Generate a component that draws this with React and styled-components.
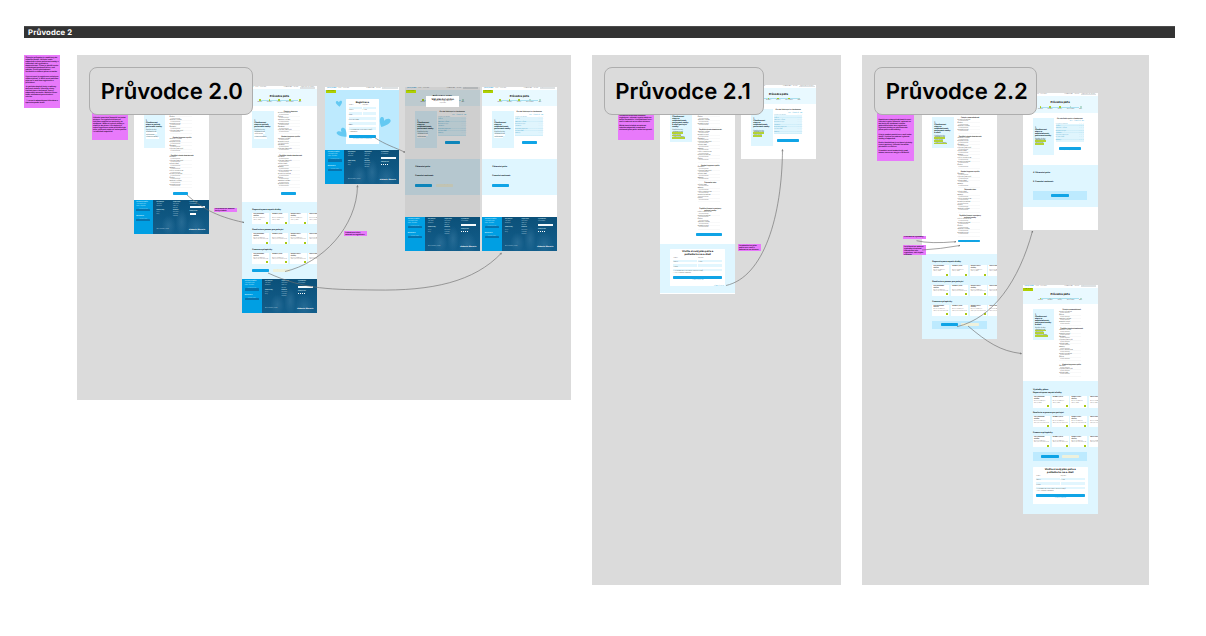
import React from "react";
import styled, { createGlobalStyle } from "styled-components";

const Global = createGlobalStyle`
  * { box-sizing: border-box; }
  body { margin: 0; background: #fff; font-family: Inter, "Liberation Sans", sans-serif; text-rendering: geometricPrecision; }
`;

/* ---------- canvas ---------- */
const Canvas = styled.main`
  position: relative; width: 1206px; height: 636px; overflow: hidden; background: #fff;
`;
const Placed = styled.div`
  position: absolute; left: ${p => p.$x}px; top: ${p => p.$y}px;
  width: ${p => p.$w}px; height: ${p => p.$h}px; overflow: hidden;
`;
const TitleBar = styled(Placed)`
  background: #333; border-top: 1px solid #4b4b4b; color: #fff; padding-left: 4px;
  font-size: 7.7px; font-weight: 700; line-height: 11px; letter-spacing: .16px;
`;
const Section = styled(Placed)`background: #dbdbdb;`;
const Frame = styled(Placed)`background: #fff; display: flex; flex-direction: column;`;
const Pill = styled(Placed)`
  margin: 0; background: #dbdbdb; border: 1px solid #adadad; border-radius: 8px; display: flex; align-items: center;
  padding: 1.5px 0 0 10.6px; color: #000; font-size: 22.1px; font-weight: 600; letter-spacing: -.05px; white-space: nowrap;
`;
const Sticky = styled(Placed)`
  background: #e879fb; color: #2b0733; padding: ${p => p.$pad || "2px 2px"};
  font-size: 1.9px; line-height: 2px; font-weight: 700;
  display: flex; flex-direction: column; justify-content: ${p => p.$end ? "flex-end" : "flex-start"};
  p { margin: 0 0 2.2px; }
  p:last-child { margin-bottom: ${p => p.$end || 0}px; }
`;
const Arrows = styled.svg`
  position: absolute; left: 0; top: 0; width: 1206px; height: 636px; pointer-events: none;
`;

/* ---------- page parts ---------- */
const Nav = styled.div`
  height: 3px; flex: none; display: flex; align-items: center; gap: 1.6px; padding: 0 1.5px 0 2px;
  font-size: 1.6px; line-height: 3px; color: #555; white-space: nowrap; background: #fff;
  b { color: #169edb; } i { flex: 1; }
`;
const NavBox = styled.span`background: #dde1e3; height: 1.6px; line-height: 1.6px; padding: 0 1px;`;
const Hero = styled.div`
  position: relative; flex: none; height: 16.7px; background: #e9f9ff; display: flex; flex-direction: column;
  align-items: center; padding-top: 4.4px;
`;
const HeroTitle = styled.div`font-size: 2.6px; line-height: 4px; font-weight: 800; color: #222;`;
const Steps = styled.div`
  margin-top: 1.6px; width: 44px; display: flex; justify-content: space-between;
  background: linear-gradient(#a9dfef, #a9dfef) 3px .6px / 38px 1px no-repeat;
`;
const Step = styled.div`
  display: flex; flex-direction: column; align-items: center; font-size: 1.35px; line-height: 1.5px; color: #444;
  &::before { content: ""; width: 1.6px; height: 1.6px; border-radius: 50%; background: ${p => p.$on ? "#a5cb00" : "#a8d8c8"}; margin-bottom: 1px; }
`;
const GreenTag = styled.div`
  position: absolute; left: .5px; top: 0; width: 10px; height: 3px; background: #afd000;
  color: #5a7400; font-size: 1.4px; line-height: 3px; text-align: center; z-index: 1;
`;
const Body = styled.div`
  flex: none; height: ${p => p.$h}px; display: flex; gap: ${p => p.$gap ?? 4.5}px; padding: 5px 0 0 10.3px; overflow: hidden;
`;
const Side = styled.aside`
  flex: none; width: 21.3px; height: ${p => p.$h || 37}px; background: #dff6ff; padding: ${p => p.$top ?? 9}px 2px 0;
  font-size: 2px; line-height: 2px; font-weight: 800; color: #173039;
  small { display: block; font-size: 1.6px; line-height: 2.6px; font-weight: 500; margin-top: 1.2px; }
`;
const Mark = styled.span`
  display: table; background: ${p => p.$g ? "#b3d334" : "#fff"}; color: ${p => p.$g ? "#3a4d00" : "#555"};
  font-size: 1.5px; line-height: 1.9px; font-weight: 600; padding: 0 .5px; margin-bottom: .7px;
`;
const Form = styled.div`flex: none; width: 25px; display: flex; flex-direction: column;`;
const GroupTitle = styled.div`
  flex: none; height: ${p => p.$h || 2.4}px; margin-top: ${p => p.$gap || 0}px; font-size: 1.7px; line-height: 2px; font-weight: 700;
  text-align: center; color: #222; white-space: nowrap;
`;
const Row = styled.div`
  flex: none; height: 3.4px; width: 22px; color: #333; font-size: 1.55px; line-height: 1.6px; font-weight: 500;
  background: linear-gradient(#f1f2f3, #f1f2f3) 0 100% / 100% .5px no-repeat;
  white-space: nowrap; span { padding-left: 1px; display: block; color: #777; font-size: 1.3px; line-height: 1.4px; }
`;
const Button = styled.div`
  flex: none; width: ${p => p.$w || 15}px; height: 2.9px; border-radius: .7px; margin: ${p => p.$m || 0};
  background: ${p => p.$ghost ? "#eef1dc" : "#10a4e6"}; color: ${p => p.$ghost ? "#77774a" : "#07496c"};
  font-size: 1.5px; line-height: 2.8px; font-weight: 500; text-align: center; white-space: nowrap; overflow: hidden;
`;
const LinkLine = styled.div`font-size: 1.5px; line-height: 2.4px; color: #25a5d8; text-align: ${p => p.$a || "center"}; padding-right: ${p => p.$r || 0}px;`;
const Band = styled.div`
  flex: none; height: ${p => p.$h}px; padding: ${p => p.$top}px 0 0 10.3px; background: #dff6ff; overflow: hidden;
`;
const BandTitle = styled.div`
  font-size: 2px; line-height: 3px; height: ${p => p.$h || 3.8}px; font-weight: 800; color: #152c35; white-space: nowrap;
`;
const CardRow = styled.div`display: flex; gap: 1.5px; margin-bottom: 4.7px; width: 80px;`;
const Card = styled.div`
  flex: none; width: 17.2px; height: 11.3px; background: #fff; padding: 1px 1.2px .6px; display: flex; flex-direction: column;
  font-size: 1.35px; line-height: 1.6px; color: #666; overflow: hidden;
  b { font-size: 1.6px; line-height: 1.9px; color: #111; height: 3.9px; flex: none; }
`;
const Plus = styled.i`align-self: flex-end; margin-top: auto; flex: none; width: 2px; height: 2px; background: #a8c914;`;
const ActionRow = styled.div`display: flex; gap: 3.5px;`;
const ActionBox = styled.div`
  width: 54.5px; height: 8.8px; background: #bdeafe; display: flex; align-items: center; justify-content: center; gap: 3px;
`;
const TableCol = styled.div`flex: none; width: 28px; display: flex; flex-direction: column;`;
const TableRow = styled.div`
  display: flex; justify-content: space-between; height: 2.3px;
  background: linear-gradient(#c3e8f6, #c3e8f6) 0 100% / 100% .5px no-repeat #e0f5fd;
  font-size: 1.45px; line-height: 2px; color: #3c9fca; white-space: nowrap;
`;
const FormCard = styled.div`
  width: ${p => p.$w}px; height: ${p => p.$h}px; background: #fff; border-radius: .6px; padding: ${p => p.$pad || "1.6px 3px"};
  display: flex; flex-direction: column; color: #444; font-size: 1.4px; line-height: 2px;
`;
const FormTitle = styled.div`font-size: 2.5px; line-height: 3px; font-weight: 800; text-align: center; color: #171717; margin-bottom: 1.6px;`;
const Fields = styled.div`display: flex; gap: 1px; margin-bottom: ${p => p.$mb || 0}px;`;
const Field = styled.div`flex: 1; &::after { content: ""; display: block; height: 2.4px; background: #e2f6fe; }`;
const Blue = styled.div`flex: none; height: 34px; display: flex; background: #0b5680; margin-top: auto;`;
const FootSide = styled.div`
  width: 19.5px; background: #009fe3; padding: 2.4px 2.7px; font-size: 1.5px; line-height: 2px; color: #dff5ff; white-space: nowrap;
`;
const DarkPill = styled.div`width: 14px; height: 2.2px; border-radius: .6px; background: #0873ad; color: #9fcbe2; font-size: 1.2px; line-height: 2.2px; text-align: center; margin: 1px 0 4.6px;`;
const FootMain = styled.div`
  flex: 1; padding: 2.3px 3.5px 1.5px; display: flex; flex-direction: column; justify-content: space-between;
  background:
    radial-gradient(ellipse 7px 10px at 28% 75%, #3f7fa677, transparent),
    radial-gradient(ellipse 6px 13px at 51% 65%, #3f7fa677, transparent),
    radial-gradient(ellipse 9px 12px at 77% 80%, #3f7fa666, transparent),
    linear-gradient(#0b5079, #135e8b);
  color: #a9cadb; font-size: 1.3px; line-height: 2.1px;
`;
const FootCols = styled.div`display: grid; grid-template-columns: 16.5px 16.5px 15px; white-space: nowrap; b { color: #d5e6ef; }`;
const Search = styled.div`height: 1.9px; background: #f4fafc; margin: .4px 0 3px;`;
const Socials = styled.div`display: flex; gap: .6px; i { width: 1.3px; height: 1.3px; background: #fff; }`;
const FootBottom = styled.div`display: flex; justify-content: space-between; b { color: #fff; font-size: 1.9px; }`;
const Overlay = styled.div`position: absolute; left: 0; top: 0; width: 100%; height: 130.5px; background: rgba(0,0,0,.19);`;
const Modal = styled.div`
  position: absolute; left: 21.3px; top: 9.5px; width: 33px; height: 11px; background: #fff; text-align: center; padding-top: 2px;
  font-size: 1.6px; line-height: 1.9px; color: #222; b { display: block; font-size: 2.4px; line-height: 3.4px; color: #000; }
`;
const BlueStage = styled.div`position: relative; flex: none; height: 60.5px; background: #bdeafe; padding: 9px 0 0 20.8px;`;
const Hearts = styled.svg`position: absolute; left: 0; top: 0; width: 74.5px; height: 60.5px;`;

const TopNav = () => (
  <Nav><b>pečuj doma</b><span>Život</span><span>Poradna</span><i />
    <span>Pomáháme</span><span>O nás</span><NavBox>Vyhledat na webu</NavBox></Nav>
);
const PageHero = ({ title = "Průvodce péče", on = 1, tag }) => (
  <Hero>
    {tag && <GreenTag>Zpět na web</GreenTag>}
    <HeroTitle>{title}</HeroTitle>
    <Steps>{["Situace", "Potřeby", "Služby", "Doporučení", "Plán"].map((s, i) => <Step key={s} $on={i < on}>{s}</Step>)}</Steps>
  </Hero>
);
const labels = ["Domácí prostředí", "Chůze", "Vstávání z lůžka", "Koupání a mytí", "Oblékání", "Příprava jídla a pití", "Užívání léků", "Nákupy", "Péče o domácnost"];
const Sidebar = ({ h, top, marks, green, children }) => (
  <Side $h={h} $top={top}>1.<br />{children || <>Zhodnocení stavu a potřeb pečované osoby</>}
    <small>Vyplňte kroky</small>
    {["Soběstačnost", "Péče doma", "Finance a dávky"].slice(0, marks || 3).map(m => <Mark key={m} $g={green}>{m}</Mark>)}
  </Side>
);
const Groups = ({ list }) => list.map(([title, n, gap = 2.6, th], g) => (
  <React.Fragment key={g}>
    <GroupTitle $h={th} $gap={g ? gap : 0}>{title}</GroupTitle>
    {Array.from({ length: n }, (_, i) => <Row key={i}>{labels[(i + g * 2) % 9]}<span>Zvolte možnost</span></Row>)}
  </React.Fragment>
));
const Cards = ({ rows }) => rows.map((t, r) => (
  <React.Fragment key={t}>
    <BandTitle>{t}</BandTitle>
    <CardRow>{["Pečovatelská služba", "Domácí péče", "Odlehčovací služby", "Denní stacionář"].map((c, i) => (
      <Card key={c}><b>{c}</b><span>Pomoc s běžnými úkony {r ? "a podpora doma" : "péče"}</span><Plus /></Card>
    ))}</CardRow>
  </React.Fragment>
));
const bandRows = ["Doporučujeme zajistit služby", "Domluvte si pomoc pro pečující", "Finance a příspěvky"];
const Footer = () => (
  <Blue>
    <FootSide><b>Chcete poradit?</b><br />Zavolejte nám<br />nebo napište
      <DarkPill>Kontaktujte nás</DarkPill><b>Newsletter</b><DarkPill>Přihlásit odběr</DarkPill></FootSide>
    <FootMain>
      <FootCols>
        <div><b>Pro pečující</b><br />Jak začít<br />Poradna<br /><br /><b>Naše služby</b><br />Kurzy<br />Blog</div>
        <div><b>Organizace</b><br />Kdo jsme<br />Náš tým<br />Kariéra<br /><b>Důležité</b><br />Podmínky<br />Cookies<br />Napište</div>
        <div><b>Vyhledávání</b><br />Co hledáte?<Search /><b>Sledujte nás</b><Socials><i /><i /><i /><i /></Socials></div>
      </FootCols>
      <FootBottom><span>© 2023 Pečuj doma</span><span><b>diakonie</b>&nbsp; <b>Moravia</b></span></FootBottom>
    </FootMain>
  </Blue>
);
const Contact = () => (
  <FormCard $w={54.7} $h={37.3}>
    <FormTitle>Vložte si svůj plán péče a<br />pošleme ho na e-mail</FormTitle>
    <Fields><Field>Jméno</Field><Field>Příjmení</Field></Fields>
    <Fields><Field>Telefon</Field><Field>E-mail</Field></Fields>
    <Fields><Field>Zpráva</Field></Fields>
    <div>☐ Souhlasím se zpracováním osobních údajů<br />☐ Chci dostávat newsletter</div>
    <Button $w={48.7} $m="1.2px 0 .4px">Odeslat plán péče</Button>
    <LinkLine>Zrušit a vrátit se</LinkLine>
  </FormCard>
);
const TableBody = ({ h, green, gap = 1.6, w = 15, link }) => (
  <Body $h={h} $gap={gap}>
    <Sidebar green={green} marks={2}>Zhodnocení stavu a soběstačnosti pečované osoby</Sidebar>
    <TableCol>
      <GroupTitle $h={3.6}>Co vás čeká nyní a v budoucnu</GroupTitle>
      <LinkLine $a="right">Ano &nbsp; Částečně &nbsp; Ne</LinkLine>
      {labels.slice(0, 8).map(l => <TableRow key={l}><span>{l}</span><span>– &nbsp; – &nbsp; –</span></TableRow>)}
      <Button $w={w} $m="5.4px auto 0">Pokračovat dále</Button>
      {link && <LinkLine>Zpět na předchozí</LinkLine>}
    </TableCol>
  </Body>
);

const classic = [["Pohyb a doprava", 6], ["Osobní hygiena a péče", 4], ["Zajištění chodu domácnosti", 9, 2.6]];
const support = <>Zajištění financí a podpory<br />pečující osoby</>;

export default function App() {
  return (
    <Canvas>
      <Global />
      <TitleBar as="header" $x={24} $y={25.5} $w={1151} $h={12.5}>Průvodce 2</TitleBar>
      <Section as="section" $x={77} $y={55} $w={494} $h={345} />
      <Section as="section" $x={592} $y={55} $w={249.3} $h={530.4} />
      <Section as="section" $x={862.4} $y={55} $w={286.5} $h={530.4} />

      <Sticky $x={24} $y={55} $w={36.4} $h={53.3} $pad="2.4px 1.5px">
        <p>Stávající průvodce je rozdělený do několika kroků. Uživatel zadá odpovědi o stavu pečované osoby a následně vidí výsledek s doporučením. Cílem je zkrátit cestu a nabídnout možnosti dříve, než odejde. Ověřit přehlednost formuláře a uložení plánu na webu.</p>
        <p>V první verzi je registrace nutná pro uložení plánu. V další verzi pošleme plán na e-mail bez registrace a přihlášení.</p>
        <p>Je potřeba doplnit texty a odkazy do karet služeb. Všechny stavy tlačítek jsou v knihovně, barvy odpovídají manuálu. Mobilní verze bude následovat po schválení návrhu.</p>
        <p>&nbsp; 1. verze k odsouhlasení klientem a úpravám podle testů</p>
      </Sticky>

      <Sticky $x={91.5} $y={90} $w={36.5} $h={49.8} $end={7} $pad="0 1.5px">
        <p>Uživatel prochází formulář na jedné stránce. Po vyplnění klikne na tlačítko a zobrazí se mu karty se službami. Může si vybrat služby a uložit je do plánu. Pro uložení je nutná registrace nebo přihlášení do účtu, plán pak najde ve svém profilu i s tabulkou odpovědí.</p>
      </Sticky>
      <Frame $x={133.5} $y={86.5} $w={75} $h={147}>
        <TopNav /><PageHero />
        <Body $h={93.3}><Sidebar h={37} /><Form><Groups list={classic} /><Button $m="4px 0 0 3px">Zobrazit výsledky</Button></Form></Body>
        <Footer />
      </Frame>
      <Frame $x={242} $y={86.3} $w={74.8} $h={226.5}>
        <TopNav /><PageHero on={5} />
        <Body $h={96}><Sidebar h={37} /><Form><Groups list={classic} /><Button $m="4px 0 0 3px">Upravit odpovědi</Button></Form></Body>
        <Band $h={77} $top={7.3}><Cards rows={bandRows} />
          <ActionRow><Button $w={17.2}>Uložit plán péče</Button><Button $w={17.5} $ghost>Vytisknout plán</Button></ActionRow></Band>
        <Footer />
      </Frame>
      <Frame $x={325} $y={86.5} $w={74.3} $h={97.5}>
        <TopNav />
        <BlueStage>
          <GreenTag>Zpět na web</GreenTag>
          <Hearts viewBox="0 0 74.5 60.5" fill="#64c9f2">
            <path d="M14.5 16.8C12.5 15 10.5 13.5 10.8 12C11.2 10.6 13 10.8 13.8 12.2C14.6 10.4 17 9.9 17 12C17 13.8 15.5 15.5 14.5 16.8Z" />
            <path d="M56.3 37C54.6 33 54 28 56.5 27C58.6 26.4 59.4 28.8 59 31C61 28.5 64.5 28 65.6 30.3C66.4 33 61 35.8 56.3 37Z" />
            <path d="M21.5 46.8C17 46.6 12 45.5 11.6 43C11.6 41 14.6 40.6 16.6 41.8C15.2 39.4 16.4 37.4 18.4 37.8C21 38.5 21.7 42.5 21.5 46.8Z" />
          </Hearts>
          <FormCard $w={33} $h={45} $pad="2px 3px">
            <FormTitle>Registrace</FormTitle>
            <Fields $mb={.8}><Field>Jméno</Field><Field>Příjmení</Field></Fields>
            <Fields $mb={.8}><Field>Telefon</Field><Field>E-mail</Field></Fields>
            <Fields $mb={.6}><Field>Heslo</Field></Fields>
            <Fields $mb={.4}><Field>Potvrzení hesla</Field></Fields>
            <Fields $mb={.4}><Field>Město</Field></Fields>
            <div>☐ Souhlasím se zpracováním údajů<br />☐ Newsletter</div>
            <Button $w={27} $m="1.4px 0 1px">Registrovat se</Button>
            <LinkLine>Už máte účet? Přihlaste se</LinkLine>
          </FormCard>
        </BlueStage>
        <Footer />
      </Frame>
      {[405, 482].map((x, i) => (
        <Frame key={x} $x={x} $y={86.5} $w={74.8} $h={164.3}>
          <TopNav /><PageHero on={3} tag />
          <TableBody h={52.8} />
          <Band $h={36} $top={7.2}><BandTitle $h={8.6}>Zdravotní péče</BandTitle><BandTitle $h={9.1}>Finanční možnosti</BandTitle>
            <ActionRow><Button $w={17.2}>Upravit plán péče</Button>{i === 0 && <Button $w={17.5} $ghost>Smazat plán péče</Button>}</ActionRow></Band>
          <Footer />
          {i === 0 && <><Overlay /><Modal><b>Váš plán byl uložen</b>Najdete ho ve svém účtu<br />v profilu</Modal></>}
        </Frame>
      ))}
      <Sticky $x={214} $y={207.5} $w={22.7} $h={4.3} $pad=".2px 1px"><p>Po kliknutí se zobrazí karty služeb</p></Sticky>
      <Sticky $x={344.3} $y={231.2} $w={22.7} $h={4.8} $pad=".4px 1px"><p>Pokud není účet, zobrazí se registrace</p></Sticky>
      <Pill as="h2" $x={89.2} $y={67} $w={164} $h={47.7}>Průvodce 2.0</Pill>

      <Sticky $x={618} $y={90} $w={36.2} $h={49.6} $end={8.3} $pad="0 1.3px">
        <p>Zkrácená cesta bez nutnosti registrace, uživatel vyplní údaje na konci formuláře. Plán pošleme na e-mail a zobrazí se na nové stránce.</p>
        <p>Místo karet služeb se zobrazí tabulka odpovědí a možnost stáhnout plán péče nebo ho upravit.</p>
      </Sticky>
      <Frame $x={660} $y={86.5} $w={75} $h={207}>
        <TopNav /><PageHero />
        <Body $h={137.8} $gap={6.2}><Sidebar h={30.5} top={3} green>Zhodnocení stavu a soběstačnosti pečované osoby a okolí pečující osoby</Sidebar>
          <Form><Groups list={[["Pohyb", 4], ["Zajištění chodu domácnosti", 9, 2.2], ["Osobní hygiena a péče", 4, 2.8], ["Zdravotní stav", 5, 1.4], [support, 5, 6, 4.5]]} />
            <Button $w={26} $m="4px 0 0 -2px">Odeslat a zobrazit výsledky</Button></Form></Body>
        <Band $h={49.5} $top={4.8}><Contact /><LinkLine $a="right" $r={11}>Přeskočit krok</LinkLine></Band>
      </Frame>
      <Frame $x={741} $y={84.8} $w={75} $h={74.6}>
        <TopNav /><PageHero on={4} />
        <TableBody h={54.9} green w={22.5} />
      </Frame>
      <Sticky $x={738} $y={244} $w={22.8} $h={7.3} $pad=".6px 1px"><p>Po odeslání se plán pošle na e-mail a zobrazí se na stránce</p></Sticky>
      <Pill as="h2" $x={603.7} $y={67} $w={160.5} $h={47.7}>Průvodce 2.1</Pill>

      <Sticky $x={877} $y={90} $w={36.8} $h={71} $end={7} $pad="0 1.4px">
        <p>Kombinace obou předchozích verzí. Uživatel vyplní formulář, zobrazí se mu karty se službami a může pokračovat dále bez registrace. Vybrané služby se přenesou do plánu péče a do tabulky.</p>
        <p>Plán je možné poslat na e-mail nebo uložit. V plánu se zobrazí vybrané služby a odpovědi.</p>
        <p>Krok s kontaktem je na konci stránky a není povinný. Uživatel ho může přeskočit a vrátit se.</p>
        <p>V mobilní verzi budou karty pod sebou, menu se skryje a formulář.</p>
      </Sticky>
      <Frame $x={922} $y={92.5} $w={74.8} $h={246.5}>
        <TopNav /><PageHero />
        <Body $h={141.8} $gap={4}><Sidebar h={31} top={4.4} green>Zhodnocení stavu a soběstačnosti pečované osoby a okolí</Sidebar>
          <Form><Groups list={[["Pohyb a samostatnost", 4], ["Zajištění chodu domácnosti", 9, 2.4], ["Osobní hygiena a péče", 4, 3], ["Zdravotní stav", 6, 2], [support, 5, 2.6, 4.5]]} />
            <Button $w={22.5} $m="3.4px 0 0 0">Zobrazit výsledky</Button><LinkLine>Zpět na začátek</LinkLine></Form></Body>
        <Band $h={85} $top={7.2}><Cards rows={bandRows} />
          <ActionBox><Button $w={17.5}>Uložit plán péče</Button><Button $w={17.5} $ghost>Poslat na e-mail</Button></ActionBox></Band>
      </Frame>
      <Frame $x={1022.6} $y={93} $w={75} $h={137}>
        <TopNav /><PageHero on={3} />
        <TableBody h={52.6} green w={22.5} link />
        <Band $h={42} $top={7.2}><BandTitle $h={8.5}>4. Zdravotní péče</BandTitle><BandTitle $h={10}>5. Finanční možnosti</BandTitle>
          <ActionBox><Button $w={17.5}>Upravit plán péče</Button></ActionBox></Band>
      </Frame>
      <Frame $x={1022.6} $y={284.7} $w={75} $h={229.5}>
        <TopNav /><PageHero on={1} tag />
        <Body $h={76.8} $gap={5}><Sidebar h={31} top={4.4} green>Zhodnocení stavu a soběstačnosti pečované osoby a okolí</Sidebar>
          <Form><Groups list={[["Pohyb a samostatnost", 4], ["Zajištění chodu domácnosti", 9, 2.4], ["Osobní hygiena a péče", 3, 3]]} /></Form></Body>
        <Band $h={133} $top={7.5}><BandTitle>Výsledky plánu</BandTitle><Cards rows={bandRows} />
          <ActionBox><Button $w={17.5}>Uložit plán péče</Button><Button $w={17.5} $ghost>Poslat na e-mail</Button></ActionBox>
          <div style={{ height: 6.2 }} /><Contact /></Band>
      </Frame>
      <Sticky $x={903} $y={236} $w={22.5} $h={3} $pad=".4px 1px"><p>Přechod na výsledky</p></Sticky>
      <Sticky $x={903} $y={245} $w={22.5} $h={9.8} $pad=".6px 1px"><p>Po kliknutí se zobrazí výsledky s kartami. Pokud není vše vyplněno, vidí chybu u otázky</p></Sticky>
      <Pill as="h2" $x={874.2} $y={67} $w={163.3} $h={47.7}>Průvodce 2.2</Pill>

      <Arrows viewBox="0 0 1206 636" fill="none" stroke="#707070" strokeWidth=".65">
        <defs><marker id="tip" viewBox="0 0 4 4" refX="3.6" refY="2" markerWidth="3.5" markerHeight="3.5" orient="auto"><path d="M.5 .5L3.5 2L.5 3.5" stroke="#555" /></marker></defs>
        {[
          "M187 195C201 207 214 216 244 222.5",
          "M285 271.5C322 263 357 227 357.5 185.5",
          "M268 273C305 290 333 289.5 375 290C432 291 474 282 501.5 253",
          "M374.5 137.5C386 145 394 147 405 152.3",
          "M726 285.5C764 277 782 216 782.5 149.5",
          "M957 326.7C993 318 1019 281 1032.5 231",
          "M968 326C987 342 1000 351 1021.5 353.6",
          "M916.5 240.7Q930 244 956 241.7",
          "M922 250Q940 249 960 245.5",
        ].map(d => <path key={d} d={d} markerEnd="url(#tip)" />)}
      </Arrows>
    </Canvas>
  );
}
